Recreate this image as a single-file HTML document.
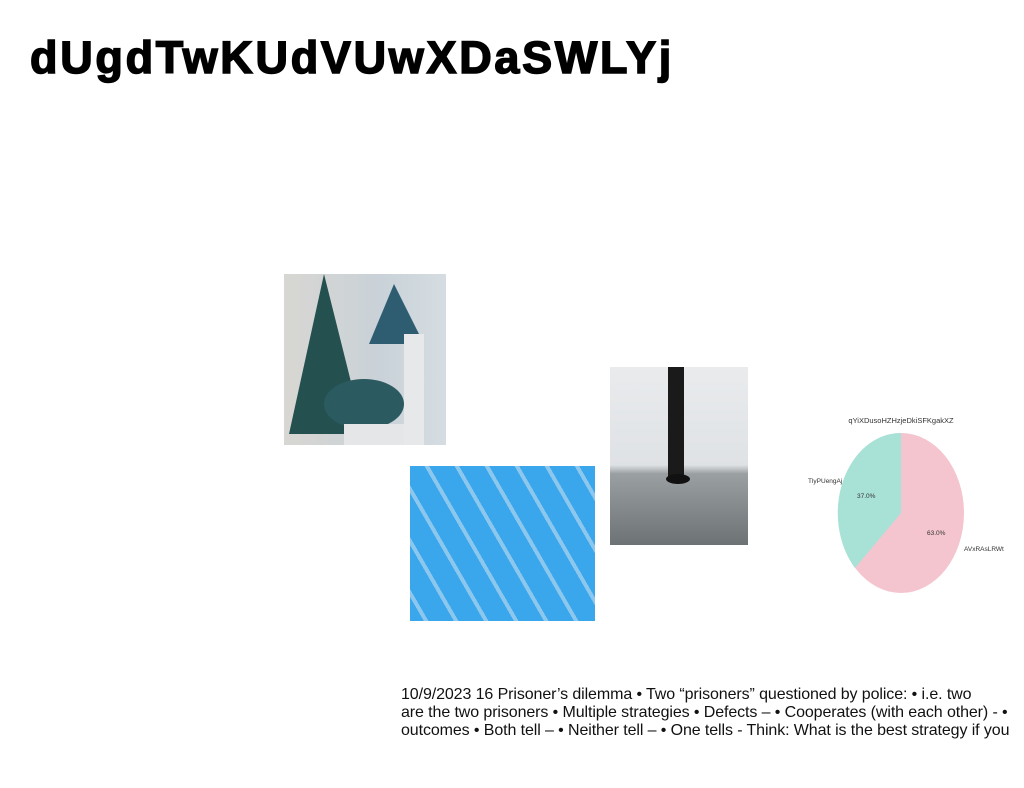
<!DOCTYPE html>
<html><head><style>
body{margin:0;width:1024px;height:788px;background:#fff;position:relative;overflow:hidden;font-family:"Liberation Sans",sans-serif}
h1{position:absolute;left:30px;top:32px;margin:0;font-size:45px;font-weight:900;letter-spacing:2.7px;color:#000;-webkit-text-stroke:1.5px #000}
.img{position:absolute}
.txt{position:absolute;left:401px;top:686px;font-size:16px;line-height:18px;color:#111;white-space:nowrap;letter-spacing:-0.1px}
</style></head><body>
<h1>dUgdTwKUdVUwXDaSWLYj</h1>
<div class="img" style="left:284px;top:274px;width:162px;height:171px;background:linear-gradient(90deg,#d8d6d2,#c9d2d8 60%,#d5dde2)">
<svg width="162" height="171"><polygon points="40,0 80,160 5,160" fill="#24504f"/><polygon points="110,10 140,70 85,70" fill="#2e5d72"/><ellipse cx="80" cy="130" rx="40" ry="25" fill="#2b5a60"/><rect x="60" y="150" width="60" height="21" fill="#e4e6e8"/><rect x="120" y="60" width="20" height="111" fill="#e6e8ea"/></svg></div>
<div class="img" style="left:410px;top:466px;width:185px;height:155px;background:repeating-linear-gradient(60deg,#3aa6ec 0 12px,#8cc7ee 12px 16px,#3aa6ec 16px 26px)"></div>
<div class="img" style="left:610px;top:367px;width:138px;height:178px;background:linear-gradient(180deg,#e9ebed 0,#dfe2e5 55%,#9a9fa2 60%,#6d7275 100%)">
<svg width="138" height="178"><rect x="58" y="0" width="16" height="110" fill="#1a1a1a"/><ellipse cx="68" cy="112" rx="12" ry="5" fill="#111"/></svg></div>
<svg class="img" style="left:800px;top:410px" width="224" height="190">
<text x="101" y="13" font-size="7.5" text-anchor="middle" fill="#333" font-family="Liberation Sans">qYiXDusoHZHzjeDkiSFKgakXZ</text>
<ellipse cx="101" cy="103" rx="63" ry="80" fill="#f4c5cf"/>
<path d="M101,103 L101,23 A63,80 0 0,0 55,158 Z" fill="#a8e1d6"/>
<text x="8" y="73" font-size="6.5" fill="#333" font-family="Liberation Sans">TlyPUengAj</text>
<text x="57" y="88" font-size="6.5" fill="#333" font-family="Liberation Sans">37.0%</text>
<text x="127" y="125" font-size="6.5" fill="#333" font-family="Liberation Sans">63.0%</text>
<text x="164" y="141" font-size="6.5" fill="#333" font-family="Liberation Sans">AVxRAsLRWt</text>
</svg>
<div class="txt">10/9/2023 16 Prisoner’s dilemma • Two “prisoners” questioned by police: • i.e. two<br>are the two prisoners • Multiple strategies • Defects – • Cooperates (with each other) - •<br>outcomes • Both tell – • Neither tell – • One tells - Think: What is the best strategy if you</div>
</body></html>
